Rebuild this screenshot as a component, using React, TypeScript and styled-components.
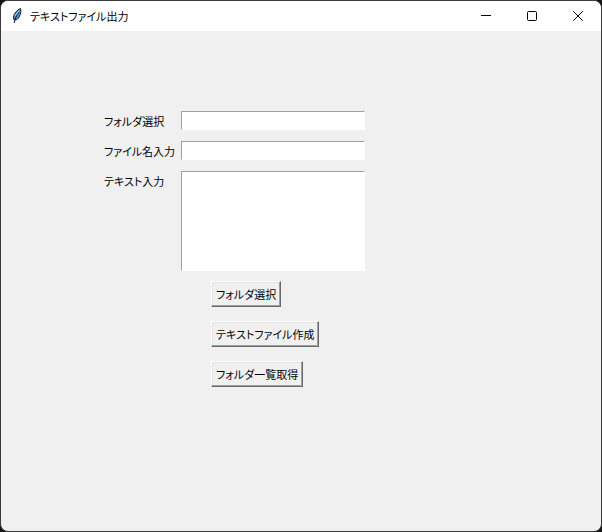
import React from "react";
import styled, { createGlobalStyle } from "styled-components";

const GlobalStyle = createGlobalStyle`
  *, *::before, *::after { box-sizing: border-box; }
  html, body, #root { height: 100%; }
  body {
    margin: 0;
    background: #141414;
    color: #000;
    font: 11px/16px "Noto Sans CJK JP", sans-serif;
    font-feature-settings: "palt";
  }
  button, input, textarea { font: inherit; font-feature-settings: inherit; color: inherit; }
`;

const AppWindow = styled.div`
  display: flex;
  flex-direction: column;
  min-height: 100%;
  border: 1px solid #3a3a3a;
  border-radius: 8px;
  overflow: hidden;
  background: #f0f0f0;
`;

const TitleBar = styled.header`
  display: flex;
  align-items: center;
  height: 30px;
  flex: none;
  padding-left: 9px;
  background: #fff;
`;

const Title = styled.h1`
  flex: 1;
  margin: 0 0 0 6px;
  font-size: 11px;
  font-weight: 400;
`;

const CaptionButton = styled.button`
  display: grid;
  place-items: center;
  width: 46px;
  height: 30px;
  padding: 0;
  border: 0;
  background: transparent;
`;

const Content = styled.main`
  flex: 1;
  padding: 80px 16px 16px 103px;
`;

const Fields = styled.div`
  display: grid;
  grid-template-columns: 77px 184px;
  row-gap: 11px;
  align-items: start;
`;

const Label = styled.label`
  padding-top: 2px;
  height: 19px;
  white-space: nowrap;
`;

const sunken = `
  width: 100%;
  margin: 0;
  padding: 1px 2px;
  border: 1px solid;
  border-color: #a0a0a0 #fff #fff #a0a0a0;
  border-radius: 0;
  background: #fff;
  outline: none;
`;

const TextField = styled.input`
  ${sunken}
  height: 19px;
`;

const TextBox = styled.textarea`
  ${sunken}
  display: block;
  height: 100px;
  resize: none;
`;

const Actions = styled.div`
  display: flex;
  flex-direction: column;
  align-items: flex-start;
  gap: 14px;
  margin: 10px 0 0 107px;
`;

const ActionButton = styled.button`
  height: 26px;
  padding: 0 4px;
  border: 1px solid;
  border-color: #fff #696969 #696969 #fff;
  box-shadow: inset -1px -1px #a0a0a0, inset 1px 1px #e3e3e3;
  background: #f0f0f0;
  white-space: nowrap;
`;

function Feather() {
  return (
    <svg width="14" height="18" viewBox="0 0 14 18" aria-hidden="true">
      <path d="M10.500 1.500C7 3 4 6.500 3.500 10L4 13L7 12.500C10 10 11.500 5 10.500 1.500Z" fill="#4b91dc" stroke="#15191f" strokeWidth="1" />
      <path d="M9 5C7 8 5 11 4.300 16" fill="none" stroke="#15191f" strokeWidth="1" />
      <path d="M9 3.500L5 9" stroke="#b4dcff" strokeWidth="1" />
    </svg>
  );
}

export default function App() {
  return (
    <>
      <GlobalStyle />
      <AppWindow>
        <TitleBar>
          <Feather />
          <Title>テキストファイル出力</Title>
          <CaptionButton type="button" aria-label="最小化">
            <svg width="10" height="10"><path d="M0 4.500H10" stroke="#000" /></svg>
          </CaptionButton>
          <CaptionButton type="button" aria-label="最大化">
            <svg width="10" height="10"><rect x=".5" y=".5" width="9" height="9" rx="1" fill="none" stroke="#000" /></svg>
          </CaptionButton>
          <CaptionButton type="button" aria-label="閉じる">
            <svg width="10" height="10"><path d="M.3 .3L9.700 9.700M9.700 .3L.3 9.700" stroke="#000" /></svg>
          </CaptionButton>
        </TitleBar>
        <Content>
          <Fields>
            <Label htmlFor="folder">フォルダ選択</Label>
            <TextField id="folder" type="text" />
            <Label htmlFor="filename">ファイル名入力</Label>
            <TextField id="filename" type="text" />
            <Label htmlFor="body">テキスト入力</Label>
            <TextBox id="body" />
          </Fields>
          <Actions>
            <ActionButton type="button">フォルダ選択</ActionButton>
            <ActionButton type="button">テキストファイル作成</ActionButton>
            <ActionButton type="button">フォルダ一覧取得</ActionButton>
          </Actions>
        </Content>
      </AppWindow>
    </>
  );
}
